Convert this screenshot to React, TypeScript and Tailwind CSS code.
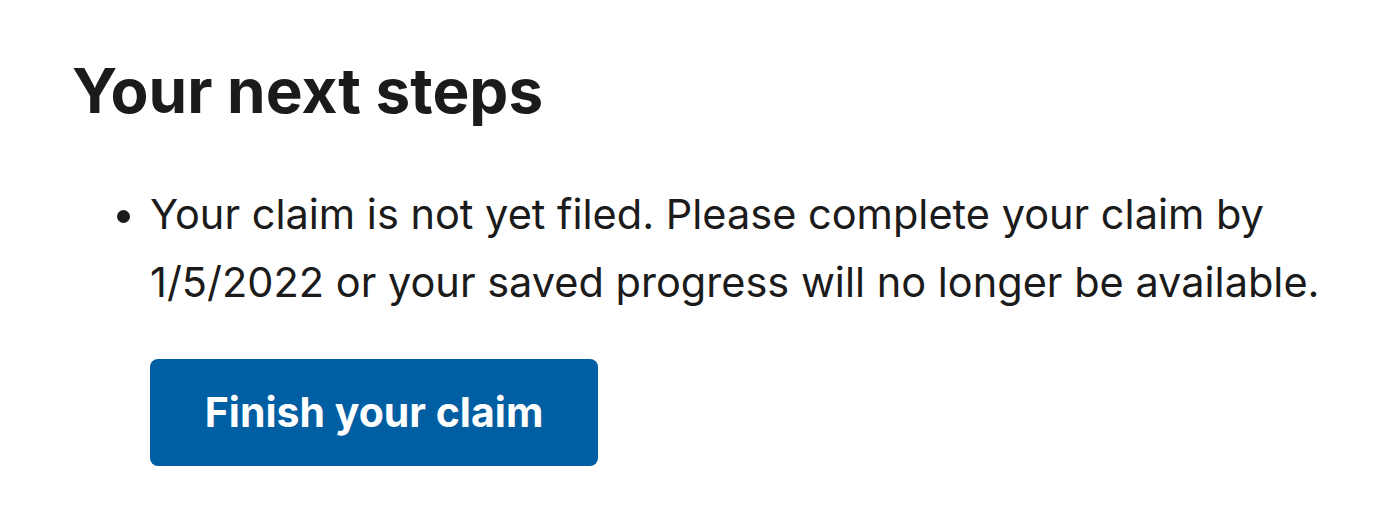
import React from 'react';

export default function App() {
  return (
    <div className="min-h-[524px] w-full bg-white text-[#1b1b1b] font-['Inter','Liberation_Sans',sans-serif] pl-[72px] pt-[55px]">
      <h2 className="text-[62px] font-bold leading-[72px]">Your next steps</h2>
      <ul className="mt-[53px] list-disc pl-[78px] text-[41.5px] leading-[68px]">
        <li>
          Your claim is not yet filed. Please complete your claim by
          <br />
          1/5/2022 or your saved progress will no longer be available.
        </li>
      </ul>
      <div className="pl-[78px] mt-[43px]">
        <button className="h-[107px] w-[448px] rounded-[8px] bg-[#005ea2] text-[41px] font-bold text-white">
          Finish your claim
        </button>
      </div>
    </div>
  );
}
